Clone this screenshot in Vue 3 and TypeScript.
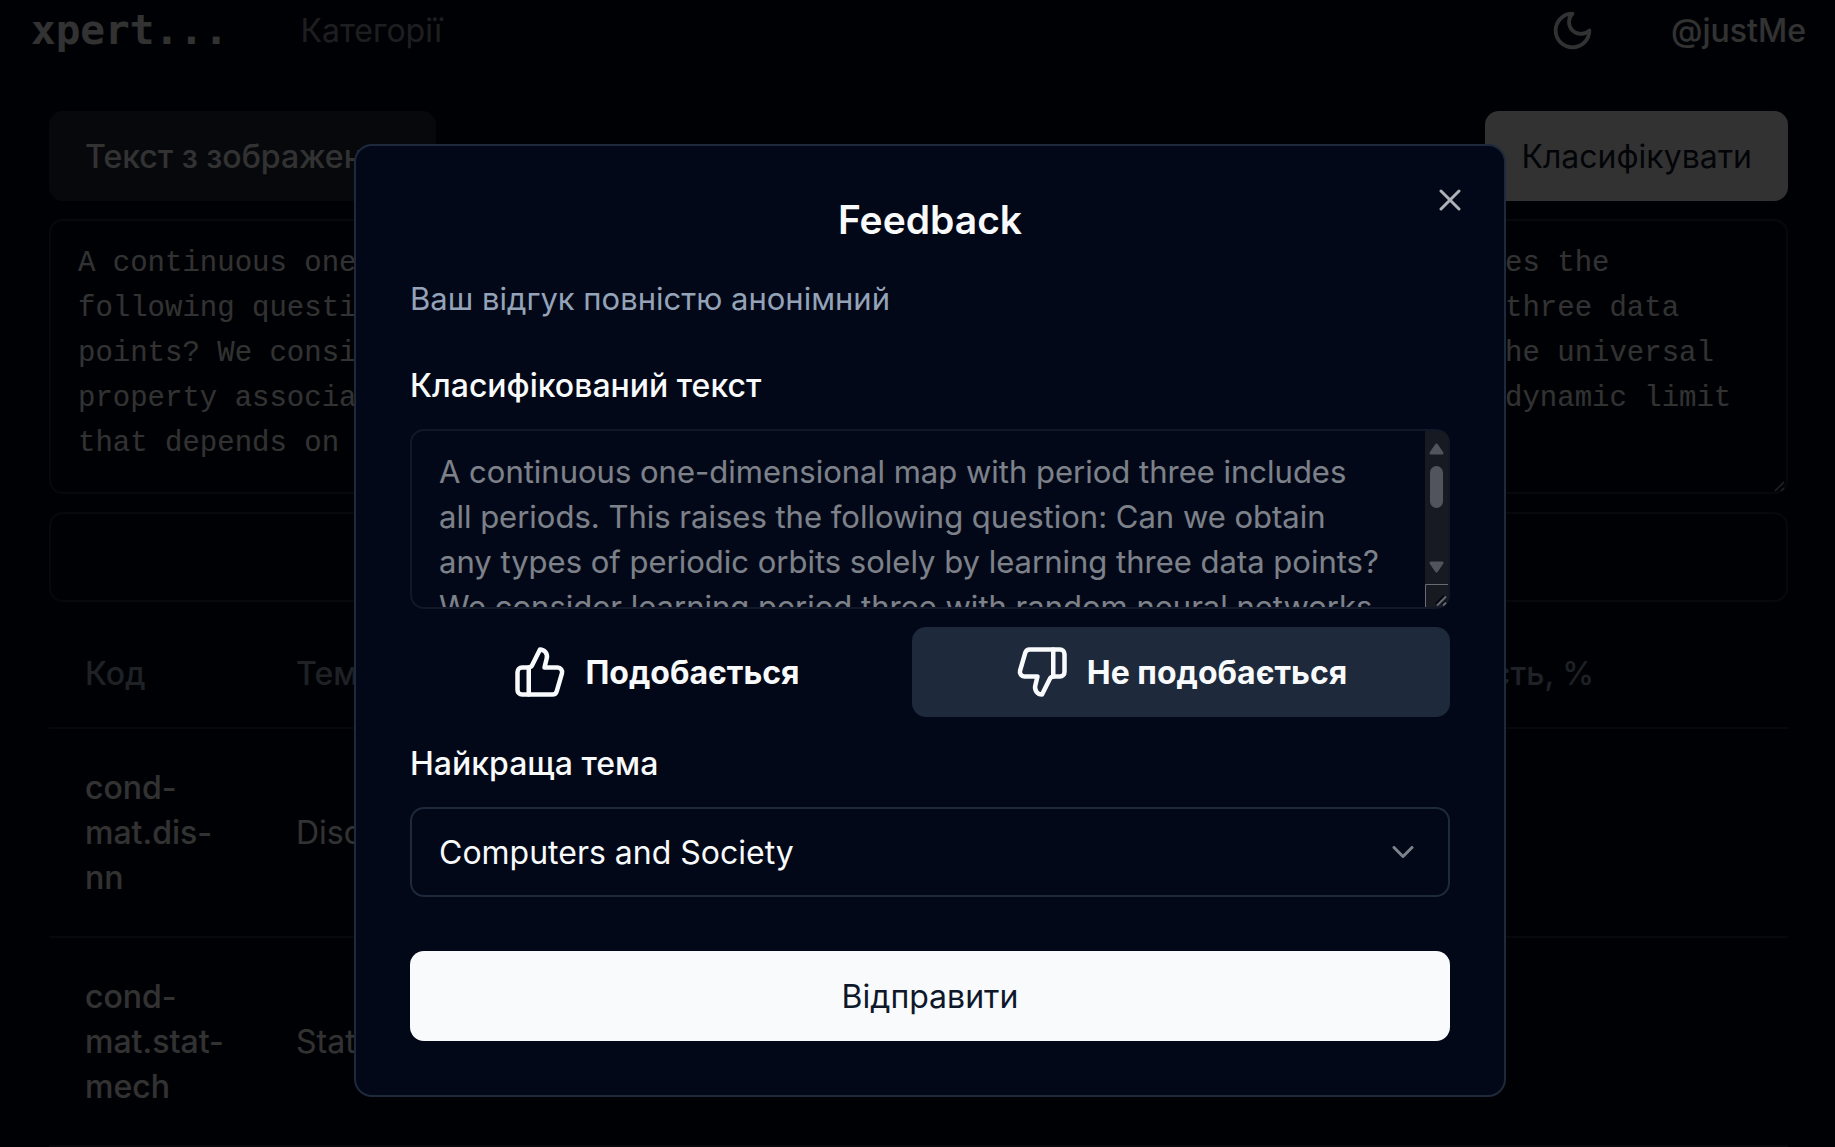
<script setup lang="ts">
import { ref } from 'vue'

interface ResultRow {
  code: string
  topic: string
  score: string
}

const abstractText =
  'A continuous one-dimensional map with period three includes all periods. This raises the following question: Can we obtain any types of periodic orbits solely by learning three data points? We consider learning period three with random neural networks and report the universal property associated with it. We first show that the trained networks have a thermodynamic limit that depends on the choice of target data and network settings.'

const source = ref(abstractText)
const liked = ref(false)
const topic = ref('Computers and Society')
const topics = ['Computers and Society', 'Disordered Systems and Neural Networks', 'Statistical Mechanics']

const rows: ResultRow[] = [
  { code: 'cond-mat.dis-nn', topic: 'Disordered Systems and Neural Networks', score: '' },
  { code: 'cond-mat.stat-mech', topic: 'Statistical Mechanics', score: '' },
]
</script>

<template>
  <div class="page">
    <header class="topbar">
      <a class="brand" href="#">xpert...</a>
      <nav class="nav"><a href="#">Категорії</a></nav>
      <button class="theme" type="button" aria-label="Тема">
        <svg viewBox="0 0 24 24" class="icon"><path d="M12 3a6 6 0 0 0 9 9 9 9 0 1 1-9-9Z" /></svg>
      </button>
      <a class="user" href="#">@justMe</a>
    </header>

    <main class="content">
      <div class="actions">
        <button class="btn secondary" type="button">Текст з зображення</button>
        <button class="btn primary" type="button">Класифікувати</button>
      </div>
      <textarea v-model="source" class="source" aria-label="Текст" spellcheck="false"></textarea>
      <button class="btn outline" type="button">Feedback</button>
      <table class="results">
        <thead>
          <tr>
            <th class="col-code">Код</th>
            <th>Тема</th>
            <th class="col-score">Ймовірність, %</th>
          </tr>
        </thead>
        <tbody>
          <tr v-for="row in rows" :key="row.code">
            <td class="code">{{ row.code }}</td>
            <td>{{ row.topic }}</td>
            <td>{{ row.score }}</td>
          </tr>
        </tbody>
      </table>
    </main>

    <div class="overlay">
      <form class="dialog" role="dialog" aria-labelledby="dialog-title" @submit.prevent>
        <button class="close" type="button" aria-label="Закрити">
          <svg viewBox="0 0 24 24" class="icon"><path d="M18 6 6 18M6 6l12 12" /></svg>
        </button>
        <h2 id="dialog-title" class="title">Feedback</h2>
        <p class="description">Ваш відгук повністю анонімний</p>

        <label class="label" for="classified">Класифікований текст</label>
        <div class="classified-box">
          <textarea id="classified" class="classified" disabled :value="abstractText"></textarea>
          <div class="scrollbar" aria-hidden="true">
            <svg viewBox="0 0 15 12" class="arrow"><path d="M7.5 2 13 10H2Z" /></svg>
            <span class="thumb"></span>
            <svg viewBox="0 0 15 12" class="arrow down"><path d="M7.5 10 13 2H2Z" /></svg>
            <svg viewBox="0 0 23 23" class="corner">
              <path d="M0.5 23V0.5H23" />
              <path class="grip-shadow" d="M11 20 19 12M17 21l4-4" />
              <path class="grip" d="M12 21.500 21 12.500M18 21.500l3-3" />
            </svg>
          </div>
        </div>

        <div class="votes">
          <button class="vote" :class="{ active: liked }" type="button" @click="liked = true">
            <svg viewBox="0 0 24 24" class="icon">
              <path d="M7 10v12" />
              <path d="M15 5.88 14 10h5.83a2 2 0 0 1 1.92 2.56l-2.33 8A2 2 0 0 1 17.5 22H4a2 2 0 0 1-2-2v-8a2 2 0 0 1 2-2h2.76a2 2 0 0 0 1.79-1.11L12 2h0a3.13 3.13 0 0 1 3 3.88Z" />
            </svg>
            Подобається
          </button>
          <button class="vote" :class="{ active: !liked }" type="button" @click="liked = false">
            <svg viewBox="0 0 24 24" class="icon">
              <path d="M17 14V2" />
              <path d="M9 18.12 10 14H4.17a2 2 0 0 1-1.92-2.56l2.33-8A2 2 0 0 1 6.5 2H20a2 2 0 0 1 2 2v8a2 2 0 0 1-2 2h-2.76a2 2 0 0 0-1.79 1.11L12 22h0a3.13 3.13 0 0 1-3-3.88Z" />
            </svg>
            Не подобається
          </button>
        </div>

        <label class="label" for="topic">Найкраща тема</label>
        <div class="select">
          <select id="topic" v-model="topic">
            <option v-for="name in topics" :key="name">{{ name }}</option>
          </select>
          <svg viewBox="0 0 24 24" class="icon chevron"><path d="m6 9 6 6 6-6" /></svg>
        </div>

        <button class="btn primary submit" type="submit">Відправити</button>
      </form>
    </div>
  </div>
</template>

<style>
body {
  margin: 0;
  overflow: hidden;
  background: #020817;
}
</style>

<style scoped>
.page,
.page * {
  box-sizing: border-box;
}

.page {
  min-height: 100vh;
  background: #020817;
  color: #f8fafc;
  font-family: Inter, sans-serif;
  font-size: 32px;
  line-height: 45px;
}

a {
  color: inherit;
  text-decoration: none;
}

button,
select,
textarea {
  margin: 0;
  font: inherit;
  color: inherit;
}

button {
  padding: 0;
  border: 0;
  background: none;
}

.icon {
  display: block;
  fill: none;
  stroke: currentColor;
  stroke-width: 2;
  stroke-linecap: round;
  stroke-linejoin: round;
}

.topbar {
  display: flex;
  align-items: center;
  height: 60px;
  padding: 0 29px 0 31px;
}

.brand {
  font-family: "DejaVu Sans Mono", monospace;
  font-size: 41px;
  font-weight: 700;
}

.nav {
  flex: 1;
  margin-left: 72px;
  color: rgba(248, 250, 252, 0.6);
}

.theme .icon {
  width: 45px;
  height: 45px;
}

.user {
  margin-left: 76px;
  font-weight: 500;
}

.content {
  display: flex;
  flex-direction: column;
  gap: 18px;
  padding: 51px 47px 0 49px;
}

.actions {
  display: flex;
  justify-content: space-between;
}

.btn {
  height: 90px;
  padding: 0 36px;
  border-radius: 14px;
}

.secondary {
  background: #1e293b;
  font-weight: 500;
}

.primary {
  background: #f8fafc;
  color: #0f172a;
}

.outline {
  border: 2px solid #1e293b;
}

.source,
.classified {
  display: block;
  width: 100%;
  border: 2px solid #1e293b;
  border-radius: 14px;
  background: #020817;
  outline: none;
}

.source {
  height: 275px;
  padding: 20px 27px;
  font-family: "Liberation Mono", monospace;
  font-size: 29px;
  overflow: hidden;
}

.source::-webkit-resizer {
  background: url("data:image/svg+xml,%3Csvg xmlns='http://www.w3.org/2000/svg' viewBox='0 0 12 12'%3E%3Cpath d='M1 11 10 2M7 11l3-3' stroke='%23b0b0b0' stroke-width='1.5'/%3E%3C/svg%3E") right bottom / 12px 12px no-repeat;
}

.results {
  width: 100%;
  border-collapse: collapse;
  table-layout: fixed;
  text-align: left;
}

.results tr {
  border-bottom: 2px solid #1e293b;
}

.results th {
  height: 108px;
  padding: 0 36px;
  color: #94a3b8;
  font-weight: 500;
}

.results td {
  padding: 36px;
}

.results .code {
  font-weight: 500;
}

.col-code {
  width: 211px;
}

.col-score {
  width: 474px;
}

.overlay {
  position: fixed;
  inset: 0;
  display: flex;
  justify-content: center;
  align-items: flex-start;
  padding: 144px 0 0 25px;
  background: rgba(0, 0, 0, 0.8);
}

.dialog {
  position: relative;
  display: flex;
  flex-direction: column;
  width: 100%;
  max-width: 1152px;
  padding: 54px;
  border: 2px solid #1e293b;
  border-radius: 18px;
  background: #020817;
}

.close {
  position: absolute;
  top: 36px;
  right: 36px;
  opacity: 0.7;
}

.close .icon,
.chevron {
  width: 36px;
  height: 36px;
}

.title {
  margin: 0 0 36px;
  font-size: 39px;
  font-weight: 600;
  line-height: 40px;
  text-align: center;
}

.description {
  margin: 0 0 49px;
  color: #94a3b8;
  font-size: 31px;
}

.label {
  margin-bottom: 27px;
  font-weight: 500;
  line-height: 32px;
}

.classified-box {
  position: relative;
  margin-bottom: 18px;
  opacity: 0.5;
}

.classified {
  height: 180px;
  padding: 18px 66px 18px 27px;
  font-size: 31px;
  overflow: hidden;
  resize: none;
}

.scrollbar {
  position: absolute;
  top: 2px;
  right: 2px;
  bottom: 2px;
  display: flex;
  flex-direction: column;
  align-items: center;
  gap: 11px;
  width: 23px;
  padding-top: 12px;
  border-radius: 0 8px 8px 0;
  background: #2c2c2c;
}

.thumb {
  width: 13px;
  height: 42px;
  border-radius: 7px;
  background: #9f9f9f;
}

.arrow {
  width: 15px;
  height: 12px;
  fill: #9f9f9f;
  stroke: #9f9f9f;
  stroke-width: 3;
  stroke-linejoin: round;
}

.down {
  margin-top: auto;
}

.corner {
  width: 23px;
  height: 23px;
  fill: none;
  stroke: #d0d0d0;
}

.grip {
  stroke: #c8c8c8;
  stroke-width: 2;
}

.grip-shadow {
  stroke: #000;
  stroke-width: 2;
}

.votes {
  display: grid;
  grid-template-columns: 493fr 538fr;
  gap: 9px;
  margin-bottom: 31px;
}

.vote {
  display: flex;
  align-items: center;
  justify-content: center;
  gap: 18px;
  height: 90px;
  border-radius: 14px;
  font-weight: 700;
}

.vote.active {
  background: #1e293b;
}

.vote .icon {
  width: 54px;
  height: 54px;
}

.select {
  position: relative;
  margin-bottom: 54px;
}

.select select {
  display: block;
  width: 100%;
  height: 90px;
  padding: 0 72px 0 27px;
  border: 2px solid #1e293b;
  border-radius: 14px;
  background: #020817;
  appearance: none;
}

.chevron {
  position: absolute;
  top: 27px;
  right: 29px;
  opacity: 0.5;
  pointer-events: none;
}
</style>
